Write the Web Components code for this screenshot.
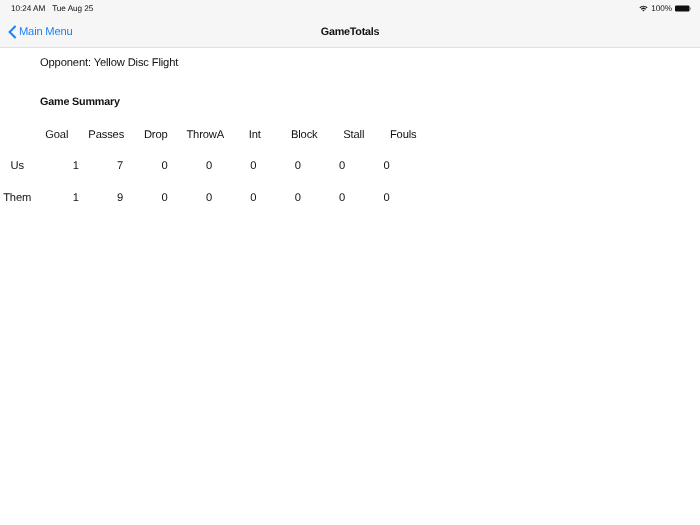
<!doctype html>
<html>
<head>
<meta charset="utf-8">
<style>
  html, body { margin: 0; background: #fff; }
  body { font-family: "Liberation Sans", Arial, sans-serif; color: #111; text-rendering: geometricPrecision; }
</style>
</head>
<body>
<app-bar title="GameTotals" back="Main Menu"></app-bar>
<game-totals opponent="Yellow Disc Flight">
  <stat-header labels="Goal,Passes,Drop,ThrowA,Int,Block,Stall,Fouls"></stat-header>
  <stat-row label="Us" values="1,7,0,0,0,0,0,0"></stat-row>
  <stat-row label="Them" values="1,9,0,0,0,0,0,0"></stat-row>
</game-totals>
<script>
class AppBar extends HTMLElement {
  constructor() {
    super();
    const shadow = this.attachShadow({ mode: "open" });
    shadow.innerHTML = `
      <style>
        :host {
          display: block;
          height: 47px;
          background: #f7f6f6;
          border-bottom: 1px solid #e2e1e1;
          will-change: transform;
        }
        .status {
          height: 15px;
          padding: 1px 9px 0 11px;
          box-sizing: border-box;
          display: flex;
          align-items: center;
          justify-content: space-between;
          font-size: 8.2px;
          letter-spacing: -0.05px;
          color: #111;
        }
        .status span + span { margin-left: 7px; }
        .right { display: flex; align-items: center; gap: 3px; }
        .nav {
          height: 32px;
          padding-top: 1px;
          box-sizing: border-box;
          display: grid;
          grid-template-columns: 1fr auto 1fr;
          align-items: center;
        }
        .back {
          display: flex;
          align-items: center;
          gap: 2px;
          padding-left: 8px;
          color: #1a80fb;
          font-size: 11.2px;
          letter-spacing: -0.2px;
        }
        h1 { margin: 0; font-size: 10.8px; font-weight: 700; letter-spacing: -0.25px; color: #111; }
      </style>
      <div class="status">
        <div><span>10:24 AM</span><span>Tue Aug 25</span></div>
        <div class="right">
          <svg width="9" height="7" viewBox="0 0 10 8"><path d="M0.3 2.6 A7 7 0 0 1 9.7 2.6 L8.7 3.7 A5.5 5.5 0 0 0 1.3 3.7Z M2 4.3 A4.4 4.4 0 0 1 8 4.3 L7 5.4 A3 3 0 0 0 3 5.4Z M3.7 6 A1.9 1.9 0 0 1 6.3 6 L5 7.5Z" fill="#222"/></svg>
          <span style="margin:0">100%</span>
          <svg width="16" height="7" viewBox="0 0 16 7"><rect x="0" y="0.5" width="14.5" height="6" rx="1.3" fill="#111"/><rect x="15" y="2.3" width="1" height="2.4" rx=".5" fill="#999"/></svg>
        </div>
      </div>
      <div class="nav">
        <div class="back">
          <svg width="9" height="14" viewBox="0 0 9 14"><path d="M7.6 1 L1.6 7 L7.6 13" fill="none" stroke="#1a80fb" stroke-width="2"/></svg>
          <span>${this.getAttribute("back")}</span>
        </div>
        <h1>${this.getAttribute("title")}</h1>
        <div></div>
      </div>`;
  }
}

class GameTotals extends HTMLElement {
  constructor() {
    super();
    const shadow = this.attachShadow({ mode: "open" });
    shadow.innerHTML = `
      <style>
        :host { display: block; font-size: 11.2px; letter-spacing: -0.15px; will-change: transform; }
        .opponent { height: 30px; line-height: 30px; padding-left: 40px; }
        h2 {
          margin: 0;
          padding-left: 40px;
          height: 30px;
          line-height: 30px;
          margin-top: 9px;
          font-size: 10.8px;
          font-weight: 700;
          letter-spacing: -0.2px;
        }
      </style>
      <div class="opponent">Opponent: ${this.getAttribute("opponent")}</div>
      <h2>Game Summary</h2>
      <slot></slot>`;
  }
}

class StatHeader extends HTMLElement {
  constructor() {
    super();
    const shadow = this.attachShadow({ mode: "open" });
    const cells = this.getAttribute("labels").split(",").map((n) => `<div>${n}</div>`);
    shadow.innerHTML = `
      <style>
        :host {
          display: grid;
          grid-template-columns: repeat(8, 49.5px);
          padding-left: 32px;
          height: 32px;
          line-height: 32px;
          margin-top: 2px;
          text-align: center;
        }
      </style>
      ${cells.join("")}`;
  }
}

class StatRow extends HTMLElement {
  constructor() {
    super();
    const shadow = this.attachShadow({ mode: "open" });
    const cells = this.getAttribute("values").split(",").map((n) => `<div class="num">${n}</div>`);
    shadow.innerHTML = `
      <style>
        :host {
          display: grid;
          grid-template-columns: 34.4px repeat(8, 44.4px);
          height: 32px;
          line-height: 31px;
        }
        .label { text-align: center; }
        .num { text-align: right; }
      </style>
      <div class="label">${this.getAttribute("label")}</div>
      ${cells.join("")}`;
  }
}

customElements.define("app-bar", AppBar);
customElements.define("game-totals", GameTotals);
customElements.define("stat-header", StatHeader);
customElements.define("stat-row", StatRow);
</script>
</body>
</html>
